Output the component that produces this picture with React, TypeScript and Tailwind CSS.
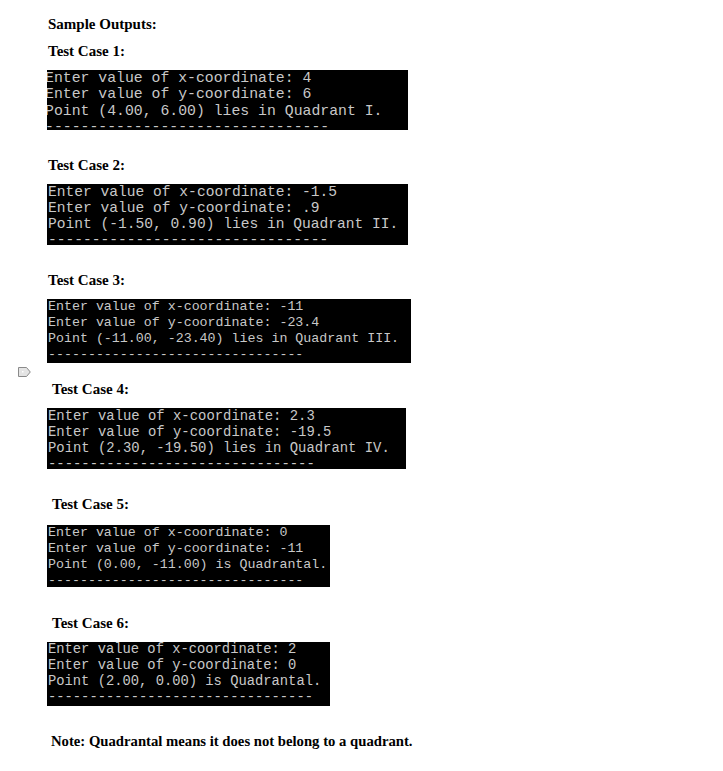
const DASHES = "--------------------------------";

type ConsoleProps = {
  lines: string[];
  className: string;
  textClass: string;
};

function Console({ lines, className, textClass }: ConsoleProps) {
  return (
    <div className={`bg-black overflow-hidden ${className}`}>
      <pre className={`font-['Liberation_Mono',monospace] text-[#c8c8c8] whitespace-pre ${textClass}`}>
        {[...lines, DASHES].join("\n")}
      </pre>
    </div>
  );
}

function Heading({ children, className = "" }: { children: React.ReactNode; className?: string }) {
  return (
    <h3 className={`font-['Liberation_Serif',serif] font-bold leading-[20px] text-black ${className}`}>
      {children}
    </h3>
  );
}

export default function App() {
  return (
    <div className="relative w-[723px] h-[771px] bg-white pl-[47px] pt-[14px]">
      <Heading className="ml-[1px] text-[15px]">Sample Outputs:</Heading>
      <Heading className="ml-[1px] mt-[7px] text-[15px]">Test Case 1:</Heading>
      <Console
        className="mt-[9px] w-[361px] h-[60px]"
        textClass="text-[14.8px] leading-[16.3px] -ml-[2px]"
        lines={[
          "Enter value of x-coordinate: 4",
          "Enter value of y-coordinate: 6",
          "Point (4.00, 6.00) lies in Quadrant I.",
        ]}
      />

      <Heading className="ml-[1px] mt-[25px] text-[15px]">Test Case 2:</Heading>
      <Console
        className="mt-[9px] w-[361px] h-[61px]"
        textClass="text-[14.6px] leading-[16px] pl-[1px]"
        lines={[
          "Enter value of x-coordinate: -1.5",
          "Enter value of y-coordinate: .9",
          "Point (-1.50, 0.90) lies in Quadrant II.",
        ]}
      />

      <Heading className="ml-[1px] mt-[25px] text-[15px]">Test Case 3:</Heading>
      <Console
        className="mt-[9px] w-[364px] h-[64px]"
        textClass="text-[13.3px] leading-[16px] pl-[1px]"
        lines={[
          "Enter value of x-coordinate: -11",
          "Enter value of y-coordinate: -23.4",
          "Point (-11.00, -23.40) lies in Quadrant III.",
        ]}
      />

      <Heading className="ml-[5px] mt-[16px] text-[15px]">Test Case 4:</Heading>
      <Console
        className="mt-[9px] w-[359px] h-[61px]"
        textClass="text-[13.9px] leading-[16px] pl-[1px]"
        lines={[
          "Enter value of x-coordinate: 2.3",
          "Enter value of y-coordinate: -19.5",
          "Point (2.30, -19.50) lies in Quadrant IV.",
        ]}
      />

      <Heading className="ml-[5px] mt-[25px] text-[15px]">Test Case 5:</Heading>
      <Console
        className="mt-[11px] w-[283px] h-[62px]"
        textClass="text-[13.3px] leading-[16px] pl-[1px]"
        lines={[
          "Enter value of x-coordinate: 0",
          "Enter value of y-coordinate: -11",
          "Point (0.00, -11.00) is Quadrantal.",
        ]}
      />

      <Heading className="ml-[5px] mt-[26px] text-[15px]">Test Case 6:</Heading>
      <Console
        className="mt-[9px] w-[283px] h-[64px]"
        textClass="text-[13.8px] leading-[16px] pl-[1px]"
        lines={[
          "Enter value of x-coordinate: 2",
          "Enter value of y-coordinate: 0",
          "Point (2.00, 0.00) is Quadrantal.",
        ]}
      />

      <Heading className="ml-[4px] mt-[25px] text-[14.7px]">
        Note: Quadrantal means it does not belong to a quadrant.
      </Heading>

      <svg className="absolute left-[18px] top-[367px]" width="13" height="10" viewBox="0 0 13 10">
        <path d="M0.5 0.5 H8.5 L12.3 5 L8.5 9.5 H0.5 Z" fill="#e4e4e4" stroke="#8a8a8a" strokeWidth="1" />
        <rect x="4" y="4" width="1.5" height="1.5" fill="#ffffff" />
      </svg>
    </div>
  );
}
